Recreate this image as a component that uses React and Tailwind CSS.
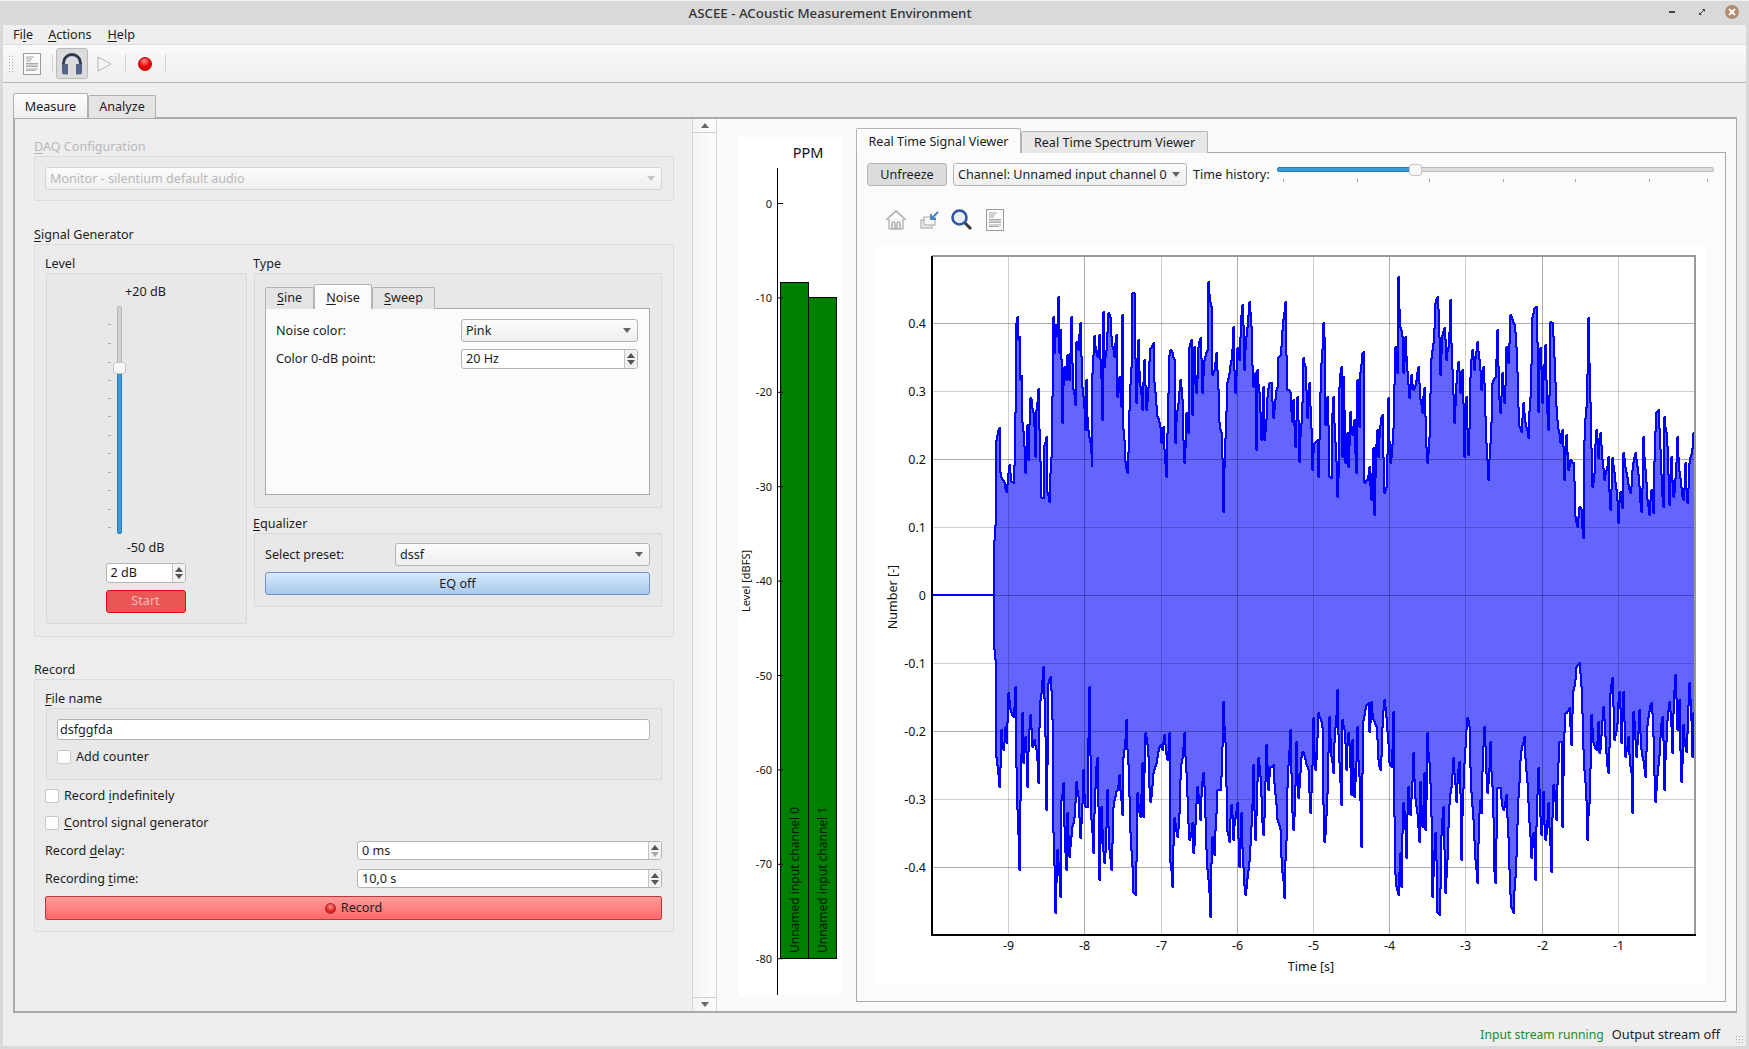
import React from "react";

const U1 = [190,900,195,795,198,540,204,510,208,505,210,640,216,660,222,670,228,695,234,640,237,615,243,665,249,670,252,615,255,455,258,190,261,172,264,240,267,230,270,360,275,345,277,490,282,560,285,640,291,495,294,600,300,415,304,420,310,460,314,590,318,450,324,388,328,510,332,715,338,715,343,555,348,530,352,700,358,725,364,590,368,170,373,280,376,195,380,230,384,110,388,280,390,210,396,490,403,320,408,360,412,285,418,360,424,170,430,390,435,435,438,245,444,270,450,190,456,385,464,510,468,360,472,475,480,550,485,620,487,340,491,228,496,260,500,290,506,225,511,300,515,480,519,155,522,320,528,270,535,160,541,175,545,260,552,290,558,225,562,410,568,350,574,440,576,165,580,510,585,605,591,640,597,450,603,320,607,100,612,102,618,430,624,240,630,380,636,450,642,300,648,450,655,380,660,265,668,250,672,370,680,470,690,505,694,550,700,500,709,650,713,400,716,285,720,270,726,280,732,300,736,550,742,450,750,360,755,420,761,610,768,460,774,520,777,260,782,240,786,465,792,260,798,400,805,260,810,235,815,400,822,300,830,270,835,65,842,140,846,345,852,330,858,280,866,490,872,520,878,755,884,535,890,365,896,340,902,300,908,200,914,400,920,265,928,300,936,135,942,330,950,200,957,125,962,200,968,380,974,340,977,570,982,330,986,400,992,540,998,380,1003,540,1010,410,1016,370,1022,370,1030,475,1040,380,1044,290,1050,285,1056,210,1064,125,1070,390,1080,400,1086,485,1090,420,1096,560,1102,410,1107,605,1114,490,1120,295,1126,320,1130,475,1136,370,1140,440,1147,630,1152,550,1160,540,1164,650];
const U2 = [3,310,8,190,12,235,15,495,21,410,27,650,33,655,36,460,39,410,45,550,50,710,55,650,58,380,62,320,67,590,70,350,76,610,82,520,85,620,90,455,96,525,102,480,108,640,111,360,117,500,120,335,125,280,129,275,133,670,140,660,146,620,152,720,158,565,162,765,170,510,175,590,182,470,186,465,192,700,197,680,204,415,211,610,218,505,224,260,230,340,234,50,240,205,245,230,250,340,256,230,262,335,268,415,272,345,280,390,288,360,294,322,300,420,306,460,312,385,316,470,322,610,328,530,334,295,340,250,345,130,352,110,360,345,366,225,372,205,378,300,384,260,390,120,396,330,402,490,408,370,414,305,420,400,426,330,432,590,438,410,444,585,450,350,456,270,462,330,470,245,476,300,482,390,490,320,495,470,503,660,510,550,516,370,524,350,530,210,536,420,541,460,547,340,552,430,558,260,564,310,571,165,577,180,583,195,590,340,598,500,604,515,610,430,618,505,625,535,630,410,636,170,642,145,648,140,654,455,660,265,666,430,676,255,684,510,690,185,696,190,702,295,708,440,714,510,720,550,726,510,732,660,738,525,744,630,750,600,758,610,764,770,770,800,776,740,784,750,789,835,792,540,797,440,803,175,810,430,815,680,822,640,828,510,834,595,840,520,846,600,852,660,858,630,864,590,870,750,876,595,882,640,888,690,894,790,900,695,906,745,910,580,916,625,924,675,930,700,936,630,944,580,950,620,956,680,964,755,970,530,976,630,982,720,988,765,994,690,1000,760,1008,455,1014,450,1020,570,1028,740,1032,470,1038,520,1046,735,1052,590,1060,710,1070,530,1078,635,1088,720,1094,610,1100,730,1108,610,1115,565,1118,520,1124,635];
const L1 = [193,0,197,60,199,325,204,375,207,410,212,240,218,300,224,230,228,280,234,130,240,180,248,200,255,110,260,480,266,660,270,450,276,190,280,340,285,260,291,410,300,195,305,290,312,270,318,300,324,400,330,150,338,50,344,260,348,480,354,100,360,80,366,210,370,550,375,790,380,600,385,640,390,740,393,450,400,400,408,660,412,490,418,620,428,520,438,395,445,440,450,565,458,360,465,470,472,470,478,110,484,510,490,610,500,325,506,690,514,470,522,640,530,420,536,600,542,660,550,470,560,420,566,375,575,495,580,320,587,210,592,300,598,440,608,730,614,735,622,430,630,500,636,340,640,500,645,250,655,320,660,455,670,370,680,320,690,285,695,300,702,255,710,330,716,250,720,640,726,710,732,505,740,560,748,490,752,340,762,250,770,440,778,570,785,520,790,610,800,410,810,510,820,370,830,660,840,800,846,560,852,615,860,420,870,420,878,155,885,280,890,545,896,575,904,465,910,570,920,460,926,650,934,490,946,735,955,660,968,345,975,570,985,325,993,440,1000,555,1008,285,1014,420,1020,350,1030,345,1037,465,1042,510,1050,540,1056,670,1062,745,1068,570,1072,410,1080,240,1088,540,1097,275,1105,445,1115,305,1125,330,1135,360,1140,490,1148,205,1155,360,1163,190];
const L2 = [5,235,12,575,20,430,26,200,32,320,38,370,44,230,50,120,56,340,62,465,66,210,72,240,78,360,84,250,92,435,96,270,102,440,112,230,118,380,123,590,130,210,137,165,143,160,148,245,153,155,160,210,168,230,175,330,180,360,186,230,192,150,198,205,206,340,212,350,218,185,224,675,228,710,234,735,240,610,243,710,250,460,258,625,264,410,270,495,278,310,288,470,296,575,300,395,306,530,312,370,316,540,322,250,328,340,334,500,337,740,344,550,350,790,356,795,362,555,368,470,376,730,384,530,390,430,400,325,408,455,416,335,422,630,432,340,442,205,448,230,456,470,464,630,470,700,480,450,484,490,493,230,500,430,510,275,516,410,522,665,525,700,532,415,540,415,548,480,558,435,566,660,572,775,578,790,584,680,593,440,600,330,606,285,612,260,620,400,628,520,634,625,640,550,646,690,654,355,662,555,668,425,676,570,684,460,694,665,700,405,708,510,716,275,722,275,726,530,736,190,746,175,754,285,760,120,768,50,776,40,782,110,790,300,794,400,802,570,806,460,812,195,820,280,828,300,834,215,838,310,850,170,856,260,864,370,870,130,876,85,882,270,890,220,898,125,904,280,910,125,916,320,924,260,932,370,937,490,940,185,948,320,958,180,966,320,974,380,982,225,992,160,1000,260,1006,455,1014,345,1020,260,1026,200,1032,420,1040,210,1048,155,1056,310,1064,75,1070,240,1076,150,1082,395,1090,225,1098,305,1108,100,1116,320,1120,190,1124,400];

function toPts(arr, x0, y0) {
  const out = [];
  for (let i = 0; i < arr.length; i += 2) out.push([x0 + arr[i] / 3, y0 + arr[i + 1] / 3]);
  return out;
}
// Densify the traced extremes to one sample per pixel column, so the trace is a solid stair line.
function dense(pts) {
  const out = [[Math.round(pts[0][0]), Math.round(pts[0][1])]];
  for (let i = 1; i < pts.length; i++) {
    const [px, py] = out[out.length - 1];
    const x = Math.max(px, Math.round(pts[i][0]));
    const y = Math.round(pts[i][1]);
    for (let c = px + 1; c < x; c++) {
      const t = (c - px) / (x - px);
      const wob = Math.sin(c * 12.9898 + i * 78.233) * 0.18 * (y - py);
      out.push([c, Math.round(py + (y - py) * t + wob)]);
    }
    out.push([x, y]);
  }
  return out;
}
function steps(pts) {
  let d = `M${pts[0][0]} ${pts[0][1]}`;
  for (let i = 1; i < pts.length; i++) d += `H${pts[i][0]}V${pts[i][1]}`;
  return d;
}
const upper = dense([...toPts(U1, 930, 260), ...toPts(U2, 1320, 260)]);
const lower = dense([...toPts(L1, 930, 650), ...toPts(L2, 1320, 650)]);
const upperD = steps(upper);
const lowerD = steps(lower);
const fillD = steps([...upper, ...[...lower].reverse()]) + "Z";

const xGrid = [[-9, 1008.5, 0], [-8, 1084.5, 1], [-7, 1161.5, 0], [-6, 1237.5, 1], [-5, 1313.5, 0], [-4, 1389.5, 1], [-3, 1465.5, 0], [-2, 1542.5, 1], [-1, 1618.5, 0]];
const yGrid = [["0.4", 323.5, 1], ["0.3", 391.5, 0], ["0.2", 459.5, 1], ["0.1", 527.5, 0], ["0", 595.5, 1], ["-0.1", 663.5, 0], ["-0.2", 731.5, 1], ["-0.3", 799.5, 0], ["-0.4", 867.5, 1]];

function Plot() {
  return (
    <svg viewBox="876 246 830 738" className="w-[830px] h-[738px] block bg-white text-[12.5px]">
      <path d={fillD} fill="#6464ff" />
      {xGrid.map(([t, x, d]) => (
        <line key={t} x1={x} x2={x} y1="256" y2="935" stroke="#000" strokeOpacity={d ? 0.32 : 0.19} />
      ))}
      {yGrid.map(([t, y, d]) => (
        <line key={t} x1="932" x2="1696" y1={y} y2={y} stroke="#000" strokeOpacity={d ? 0.32 : 0.19} />
      ))}
      <g fill="none" stroke="#0000ff" strokeWidth="2" strokeLinejoin="bevel" shapeRendering="crispEdges">
        <path d={upperD} />
        <path d={lowerD} />
        <path d="M932 595H994M994 560V650" />
      </g>
      <path d="M932 256H1695V935" fill="none" stroke="#999" strokeWidth="2" shapeRendering="crispEdges" />
      <path d="M932 256V935H1696" fill="none" stroke="#000" strokeWidth="2" shapeRendering="crispEdges" />
      {xGrid.map(([t, x]) => (
        <text key={t} x={x} y="949.5" textAnchor="middle" fill="#111">{t}</text>
      ))}
      {yGrid.map(([t, y]) => (
        <text key={t} x="926" y={y + 4.5} textAnchor="end" fill="#111">{t}</text>
      ))}
      <text x="1311" y="971" textAnchor="middle" fill="#111">Time [s]</text>
      <text x="0" y="0" transform="translate(897 597) rotate(-90)" textAnchor="middle" fill="#111">Number [-]</text>
    </svg>
  );
}

function Ppm() {
  const ticks = [0, -10, -20, -30, -40, -50, -60, -70, -80];
  return (
    <svg viewBox="739 137 102 858" className="w-[102px] h-[858px] block bg-white text-[11px] shrink-0">
      <text x="808" y="158" textAnchor="middle" fill="#111" className="text-[14.5px]">PPM</text>
      <path d="M777.5 168V995" stroke="#000" />
      <rect x="780.5" y="282.5" width="28" height="676" fill="#008000" stroke="#000" />
      <rect x="808.5" y="297.5" width="28" height="661" fill="#008000" stroke="#000" />
      {ticks.map((t, i) => {
        const y = 203.5 + i * 94.4;
        return (
          <g key={t}>
            <path d={`M778 ${y}H783`} stroke="#000" />
            <text x="772" y={y + 4} textAnchor="end" fill="#111">{t}</text>
          </g>
        );
      })}
      <text transform="translate(799 953) rotate(-90)" fill="#031703" className="text-[12px]">Unnamed input channel 0</text>
      <text transform="translate(827 953) rotate(-90)" fill="#031703" className="text-[12px]">Unnamed input channel 1</text>
      <text transform="translate(750 581) rotate(-90)" textAnchor="middle" fill="#111" className="text-[11px]">Level [dBFS]</text>
    </svg>
  );
}

const Tri = ({ up, color = "#555" }) => (
  <svg width="8" height="5" viewBox="0 0 8 5" className="block">
    <path d={up ? "M0 5L4 0L8 5Z" : "M0 0L8 0L4 5Z"} fill={color} />
  </svg>
);

function Combo({ text, className = "", disabled }) {
  return (
    <div className={`h-[23px] flex items-center justify-between pl-[4px] pr-[6px] rounded-[3px] border border-[#b4b4b4] bg-linear-to-b from-[#fcfcfc] to-[#eeeeee] ${disabled ? "text-[#b8b8b8] border-[#d4d4d4]" : ""} ${className}`}>
      <span className="whitespace-nowrap pt-px">{text}</span>
      <Tri color={disabled ? "#c4c4c4" : "#666"} />
    </div>
  );
}

function Spin({ text, className = "", h = "h-[20px]", faded }) {
  return (
    <div className={`${h} flex rounded-[3px] border border-[#b4b4b4] bg-white overflow-hidden ${className}`}>
      <span className="flex-1 pl-[4px] pt-px flex items-center whitespace-nowrap">{text}</span>
      <div className="w-[13px] border-l border-[#c4c4c4] bg-[#f2f2f2] flex flex-col items-center justify-center gap-[2px]">
        <Tri up color="#555" />
        <Tri color={faded ? "#aaa" : "#555"} />
      </div>
    </div>
  );
}

const Check = ({ label, className = "" }) => (
  <div className={`flex items-center gap-[5px] h-[14px] ${className}`}>
    <span className="w-[14px] h-[14px] rounded-[2px] border border-[#c8c8c8] bg-white shrink-0" />
    <span className="whitespace-nowrap">{label}</span>
  </div>
);

const GroupLabel = ({ children, className = "" }) => (
  <div className={`h-[20px] leading-[22px] whitespace-nowrap ${className}`}>{children}</div>
);

const DocIcon = ({ className = "" }) => (
  <svg width="18" height="22" viewBox="0 0 18 22" className={className}>
    <rect x="0.5" y="0.5" width="17" height="21" fill="#fbfbfb" stroke="#9a9a9a" />
    <path d="M3 4H11M3 6H9M3 8H8M3 10.5H15M3 12H15M3 13.5H15M3 16H15M3 17.5H13" stroke="#a8a8a8" strokeWidth="1.1" />
  </svg>
);

const Sep = () => <div className="w-px h-[19px] bg-[#d4d4d4]" />;

function Toolbar() {
  return (
    <div className="h-[38px] flex items-center border-b border-[#b8b8b8] bg-linear-to-b from-[#fafafa] to-[#eeeeee]">
      <div className="ml-[5px] w-[5px] h-[17px] bg-[radial-gradient(#a8a8a8_0.6px,transparent_0.8px)] bg-[length:3px_3px]" />
      <DocIcon className="ml-[10px]" />
      <div className="ml-[11px]"><Sep /></div>
      <div className="ml-[3px] w-[32px] h-[31px] rounded-[3px] bg-[#dcdcdc] border border-[#b8b8b8] flex items-center justify-center">
        <svg width="22" height="22" viewBox="0 0 22 22">
          <path d="M2.5 14V10a8.5 8.5 0 0 1 17 0v4" fill="none" stroke="#2f3a52" strokeWidth="2.8" />
          <path d="M1 13a2 2 0 0 1 2-2h4v10.5H3a2 2 0 0 1-2-2Z" fill="#55658a" />
          <path d="M21 13a2 2 0 0 0-2-2h-4v10.5h4a2 2 0 0 0 2-2Z" fill="#55658a" />
        </svg>
      </div>
      <svg width="15" height="16" viewBox="0 0 15 16" className="ml-[9px]">
        <path d="M1 1L14 8L1 15Z" fill="#f4f4f4" stroke="#b4b4b4" />
      </svg>
      <div className="ml-[13px]"><Sep /></div>
      <div className="ml-[12px] w-[14px] h-[14px] rounded-full border border-[#b80000] bg-[radial-gradient(circle_at_45%_25%,#ff8a8a,#ee0808_50%,#c00000)]" />
      <div className="ml-[13px]"><Sep /></div>
    </div>
  );
}

const tickYs = [324, 343, 362, 380, 398, 416, 435, 453, 472, 490, 509, 527];

function VSlider() {
  return (
    <div className="relative w-[80px] h-[228px] mt-[5px]">
      <div className="absolute left-[11px] top-0 w-[5px] h-[60px] rounded-t-[2px] bg-[#d4d4d4] border border-[#b4b4b4]" />
      <div className="absolute left-[11px] top-[60px] bottom-0 w-[5px] rounded-b-[2px] bg-[#3b9bdc] border border-[#2a7ab4]" />
      {tickYs.map((y) => (
        <div key={y} className="absolute left-[2px] w-[3px] h-px bg-[#aaaaaa]" style={{ top: y - 306 }} />
      ))}
      <div className="absolute left-[7px] top-[56px] w-[13px] h-[12px] rounded-[3px] bg-[#f8f8f8] border border-[#c4c4c4]" />
    </div>
  );
}

function LeftPanel() {
  return (
    <div className="w-[677px] pl-[19px] pr-[18px] pt-[17px] shrink-0 bg-[#eeeeee]">
      <GroupLabel className="text-[#b8b8b8]"><u className="underline-offset-2">D</u>AQ Configuration</GroupLabel>
      <div className="h-[45px] pl-[10px] pr-[11px] pt-[10px] bg-[#ebebeb] border border-[#dcdcdc] rounded-[2px]">
        <Combo text="Monitor - silentium default audio" disabled />
      </div>

      <GroupLabel className="mt-[23px]"><u className="underline-offset-2">S</u>ignal Generator</GroupLabel>
      <div className="h-[393px] flex bg-[#ebebeb] border border-[#dcdcdc] rounded-[2px] pl-[11px] pt-[8px]">
        <div className="w-[201px]">
          <GroupLabel className="-ml-px">Level</GroupLabel>
          <div className="h-[351px] bg-[#e8e8e8] border border-[#d8d8d8] rounded-[2px] flex flex-col items-center pt-[7px] pr-[2px]">
            <div className="h-[20px] leading-[22px]">+20 dB</div>
            <VSlider />
            <div className="h-[20px] leading-[20px] mt-[4px]">-50 dB</div>
            <Spin text="2 dB" className="w-[80px] mt-[5px]" />
            <div className="w-[80px] h-[23px] mt-[7px] rounded-[3px] bg-[#ea5656] border border-[#dd1111] text-[#f6bcbc] flex items-center justify-center">Start</div>
          </div>
        </div>
        <div className="w-[408px] ml-[7px]">
          <GroupLabel className="-ml-px">Type</GroupLabel>
          <div className="h-[235px] bg-[#e8e8e8] border border-[#d8d8d8] rounded-[2px] pl-[10px] pr-[11px] pt-[10px]">
            <div className="flex items-end h-[25px] relative z-10">
              <div className="w-[49px] h-[22px] border border-b-0 border-[#b4b4b4] rounded-t-[2px] bg-[#e4e4e4] flex items-center justify-center"><span><u className="underline-offset-2">S</u>ine</span></div>
              <div className="w-[58px] h-[25px] pt-[2px] border border-b-0 border-[#b4b4b4] rounded-t-[2px] bg-[#fbfbfb] flex items-center justify-center"><span><u className="underline-offset-2">N</u>oise</span></div>
              <div className="w-[63px] h-[22px] border border-b-0 border-[#b4b4b4] rounded-t-[2px] bg-[#e4e4e4] flex items-center justify-center"><span><u className="underline-offset-2">S</u>weep</span></div>
            </div>
            <div className="h-[187px] -mt-px bg-[#fbfbfb] border border-[#aaaaaa] px-[10px] pt-[10px]">
              <div className="flex items-center h-[23px]">
                <span className="w-[185px] pt-px">Noise color:</span>
                <Combo text="Pink" className="w-[177px]" />
              </div>
              <div className="flex items-center h-[20px] mt-[7px]">
                <span className="w-[185px] pt-px">Color 0-dB point:</span>
                <Spin text="20 Hz" className="w-[177px]" />
              </div>
            </div>
          </div>
          <GroupLabel className="mt-[5px] -ml-px"><u className="underline-offset-2">E</u>qualizer</GroupLabel>
          <div className="h-[74px] bg-[#e8e8e8] border border-[#d8d8d8] rounded-[2px] pl-[10px] pr-[11px] pt-[9px]">
            <div className="flex items-center h-[23px]">
              <span className="w-[130px] pt-px">Select preset:</span>
              <Combo text="dssf" className="w-[255px]" />
            </div>
            <div className="h-[23px] mt-[6px] pt-px rounded-[3px] border border-[#6f93bf] bg-linear-to-b from-[#d8eafc] to-[#a9c9ec] flex items-center justify-center">EQ off</div>
          </div>
        </div>
      </div>

      <GroupLabel className="mt-[22px]">Record</GroupLabel>
      <div className="h-[253px] bg-[#ebebeb] border border-[#dcdcdc] rounded-[2px] pl-[10px] pr-[11px] pt-[8px]">
        <GroupLabel><u className="underline-offset-2">F</u>ile name</GroupLabel>
        <div className="h-[72px] ml-px w-[616px] bg-[#e8e8e8] border border-[#d8d8d8] rounded-[2px] px-[10px] pt-[10px]">
          <div className="h-[21px] w-[593px] bg-white border border-[#b4b4b4] rounded-[3px] pl-[2px] pt-px flex items-center">dsfggfda</div>
          <Check label="Add counter" className="mt-[10px]" />
        </div>
        <Check label={<>Record <u className="underline-offset-2">i</u>ndefinitely</>} className="mt-[9px]" />
        <Check label={<><u className="underline-offset-2">C</u>ontrol signal generator</>} className="mt-[13px]" />
        <div className="flex items-center justify-between h-[19px] mt-[11px]">
          <span className="pt-px">Record <u className="underline-offset-2">d</u>elay:</span>
          <Spin text="0 ms" className="w-[305px]" h="h-[19px]" faded />
        </div>
        <div className="flex items-center justify-between h-[19px] mt-[9px]">
          <span className="pt-px">Recording <u className="underline-offset-2">t</u>ime:</span>
          <Spin text="10,0 s" className="w-[305px]" h="h-[19px]" />
        </div>
        <div className="h-[24px] mt-[8px] rounded-[2px] border border-[#b93a3a] bg-linear-to-b from-[#ff9a9a] to-[#ff6868] flex items-center justify-center gap-[5px]">
          <span className="w-[11px] h-[11px] rounded-full border border-[#a82020] bg-[radial-gradient(circle_at_50%_30%,#ff9090,#e02222_60%)]" />
          <span>Record</span>
        </div>
      </div>
    </div>
  );
}

function Scrollbar() {
  return (
    <div className="w-[25px] shrink-0 flex flex-col border-x border-[#d4d4d4] bg-linear-to-r from-[#f4f4f4] to-[#fdfdfd]">
      <div className="h-[14px] border-b border-[#cfcfcf] flex items-center justify-center"><Tri up color="#666" /></div>
      <div className="flex-1" />
      <div className="h-[14px] border-t border-[#cfcfcf] flex items-center justify-center"><Tri color="#666" /></div>
    </div>
  );
}

function HSlider() {
  const ticks = [6, 79.5, 152, 225.5, 298, 372, 430];
  return (
    <div className="relative w-[437px] h-[23px]">
      <div className="absolute left-0 top-[4px] w-[137px] h-[5px] rounded-l-[2px] bg-[#3b9bdc] border border-[#2a7ab4]" />
      <div className="absolute left-[137px] right-0 top-[4px] h-[5px] rounded-r-[2px] bg-[#dcdcdc] border border-[#bdbdbd]" />
      <div className="absolute left-[132px] top-[1px] w-[13px] h-[12px] rounded-[3px] bg-[#f8f8f8] border border-[#c4c4c4]" />
      {ticks.map((x) => (
        <div key={x} className="absolute top-[16px] w-px h-[3px] bg-[#a4a4a4]" style={{ left: x }} />
      ))}
    </div>
  );
}

function PlotTools() {
  return (
    <div className="h-[23px] mt-[22px] ml-[28px] flex items-center">
      <svg width="22" height="22" viewBox="0 0 22 22">
        <path d="M1 11L11 2L21 11" fill="none" stroke="#a8a8a8" strokeWidth="1.6" />
        <path d="M4 10V20H18V10" fill="#f4f4f4" stroke="#9c9c9c" />
        <path d="M7 20V14.5a1.5 1.5 0 0 1 3 0V20M12 20V14.5a1.5 1.5 0 0 1 3 0V20" fill="none" stroke="#8a8a8a" />
      </svg>
      <svg width="20" height="22" viewBox="0 0 20 22" className="ml-[13px]">
        <rect x="1" y="11" width="11" height="8" fill="#f0f0f0" stroke="#a0a0a0" />
        <rect x="4" y="8" width="11" height="8" fill="#f8f8f8" stroke="#a8a8a8" />
        <path d="M18 3L11 10M11 5V10H16" fill="none" stroke="#3f7fc4" strokeWidth="1.8" />
      </svg>
      <svg width="22" height="22" viewBox="0 0 22 22" className="ml-[11px]">
        <path d="M13.5 13.5L20 20" stroke="#3a3a3a" strokeWidth="3" />
        <circle cx="8.5" cy="8.5" r="7" fill="#e9eef7" stroke="#2f569e" strokeWidth="2.6" />
      </svg>
      <DocIcon className="ml-[13px]" />
    </div>
  );
}

function RightPanel() {
  return (
    <div className="flex-1 min-w-0 bg-[#fafafa] flex pl-[22px] relative">
      <div className="mt-[18px]"><Ppm /></div>
      <div className="ml-[15px] mt-[9px] w-[870px]">
        <div className="flex items-end h-[25px] relative z-10">
          <div className="w-[165px] h-[25px] pt-[2px] border border-b-0 border-[#b4b4b4] rounded-t-[2px] bg-[#fbfbfb] flex items-center justify-center">Real Time Signal Viewer</div>
          <div className="w-[187px] h-[22px] pt-px border border-b-0 border-[#b4b4b4] rounded-t-[2px] bg-[#e8e8e8] flex items-center justify-center">Real Time Spectrum Viewer</div>
        </div>
        <div className="h-[850px] -mt-px bg-[#fbfbfb] border border-[#aaaaaa] pt-[10px]">
          <div className="flex items-start pl-[10px] h-[23px]">
            <div className="w-[80px] h-[23px] pt-px rounded-[3px] border border-[#b4b4b4] bg-[#dcdcdc] flex items-center justify-center">Unfreeze</div>
            <Combo text="Channel: Unnamed input channel 0" className="w-[234px] ml-[6px]" />
            <span className="ml-[6px] w-[84px] leading-[23px] whitespace-nowrap">Time history:</span>
            <HSlider />
          </div>
          <PlotTools />
          <div className="mt-[15px] ml-[19px]"><Plot /></div>
        </div>
      </div>
    </div>
  );
}

export default function App() {
  return (
    <div className="w-[1749px] h-[1049px] overflow-hidden flex flex-col bg-[#d9d9d9] text-[12.6px] text-[#1c1c1c] font-['Noto_Sans',sans-serif]">
      <div className="h-[25px] shrink-0 border-t border-[#f2f2f2] flex items-center justify-center relative pr-[89px]">
        <span className="font-medium text-[13.3px] text-[#333] pt-px">ASCEE - ACoustic Measurement Environment</span>
        <div className="absolute right-[10px] top-[4px] flex items-center">
          <div className="w-[6px] h-[2px] bg-[#444] mr-[24px]" />
          <svg width="6" height="6" viewBox="0 0 6 6" className="mr-[20px]"><path d="M0 6V3L3 6ZM6 0V3L3 0Z" fill="#444" /><path d="M1 5L5 1" stroke="#444" /></svg>
          <div className="w-[14px] h-[14px] rounded-full bg-[#b08b6e] flex items-center justify-center">
            <svg width="8" height="8" viewBox="0 0 8 8"><path d="M1 1L7 7M7 1L1 7" stroke="#fff" strokeWidth="1.8" /></svg>
          </div>
        </div>
      </div>
      <div className="mx-[3px] mb-[3px] flex-1 min-h-0 bg-[#eeeeee] flex flex-col relative">
        <div className="h-[19px] flex items-center pl-[10px] gap-[15px] shrink-0 leading-[19px]">
          <span>Fi<u className="underline-offset-2">l</u>e</span>
          <span><u className="underline-offset-2">A</u>ctions</span>
          <span className="ml-[1px]"><u className="underline-offset-2">H</u>elp</span>
        </div>
        <div className="h-px bg-[#dcdcdc] shrink-0" />
        <Toolbar />
        <div className="mt-[10px] ml-[10px] mr-[9px] shrink-0">
          <div className="flex items-end h-[25px] relative z-10">
            <div className="w-[75px] h-[25px] pt-[2px] border border-b-0 border-[#b0b0b0] rounded-t-[2px] bg-linear-to-b from-[#fdfdfd] to-[#eeeeee] flex items-center justify-center">Measure</div>
            <div className="w-[68px] h-[23px] pt-px border border-b-0 border-[#b0b0b0] rounded-t-[2px] bg-[#e4e4e4] flex items-center justify-center">Analyze</div>
          </div>
          <div className="h-[896px] -mt-px border-2 border-[#aaaaaa] border-r-1 flex">
            <LeftPanel />
            <Scrollbar />
            <RightPanel />
          </div>
        </div>
        <div className="flex-1 flex items-center justify-end pr-[26px] pt-[11px] gap-[8px]">
          <span className="text-[#1f8a1f] text-[12.2px]">Input stream running</span>
          <span className="text-[12.8px]">Output stream off</span>
        </div>
        <div className="absolute right-[1px] bottom-[1px] w-[10px] h-[10px] bg-[radial-gradient(#a8a8a8_0.6px,transparent_0.8px)] bg-[length:3px_3px]" />
      </div>
    </div>
  );
}
